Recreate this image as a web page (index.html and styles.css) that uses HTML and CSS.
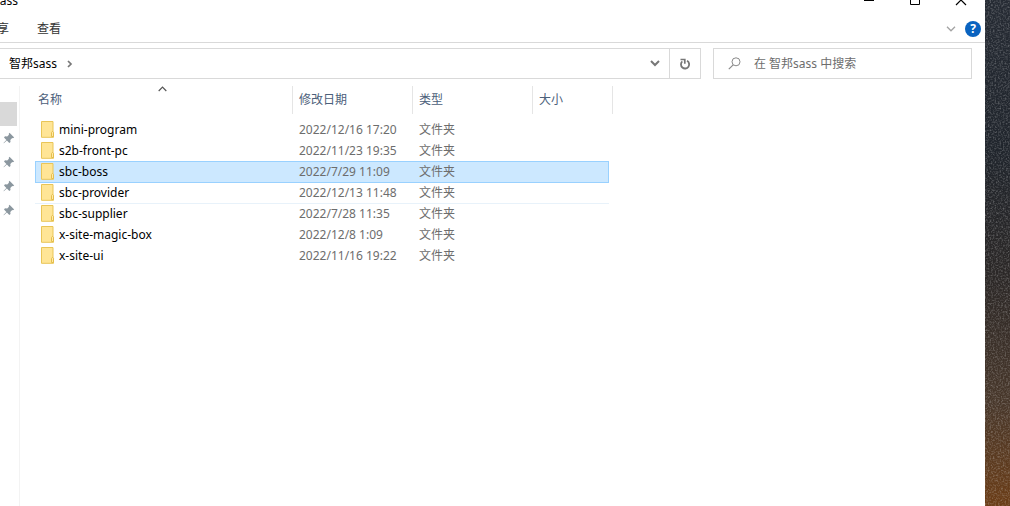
FILE: index.html
```html
<!DOCTYPE html>
<html lang="zh-CN">
<head>
<meta charset="utf-8">
<title>智邦sass</title>
<link rel="stylesheet" href="styles.css">
</head>
<body>
<svg class="defs" aria-hidden="true">
  <symbol id="folder" viewBox="0 0 14 17">
    <path d="M.5.5h11.500v10l.5.8v5H.5z" fill="#ffe596" stroke="#e9c557"/>
    <path d="M10.500 15.500v-4l1-1.200 1 1.200v4z" fill="#ffe9a6" stroke="#e5be4c"/>
  </symbol>
  <symbol id="pin" viewBox="0 0 12 12">
    <path d="M6.500.8l4.700 4.700-1.300.7-.7-.3-1.900 2 .2 2-1.200 1L3.900 8.500.8 11.300l-.3-.3 2.900-3.100L1 5.500l1-1.200 2.200.3 1.800-1.900-.3-.8z" fill="#8b979f"/>
  </symbol>
</svg>
<div class="screen">
  <main class="window">
    <header class="titlebar">
      <h1 class="title">sass</h1>
      <div class="controls">
        <button class="control" aria-label="最小化"><svg width="12" height="12"><path d="M1 6.500h10" stroke="#000"/></svg></button>
        <button class="control" aria-label="最大化"><svg width="12" height="12"><path d="M1.500 1.500h9v9h-9z" fill="none" stroke="#000"/></svg></button>
        <button class="control" aria-label="关闭"><svg width="12" height="12"><path d="M1 1l10 10M11 1L1 11" stroke="#000" stroke-width="1.200"/></svg></button>
      </div>
    </header>
    <nav class="ribbon">
      <button class="tab tab-share">享</button>
      <button class="tab">查看</button>
      <button class="expand" aria-label="展开功能区"><svg width="10" height="6"><path d="M1 .8l4 4 4-4" fill="none" stroke="#a3a3a3" stroke-width="1.300"/></svg></button>
      <button class="help" aria-label="帮助">?</button>
    </nav>
    <div class="toolbar">
      <div class="address">
        <button class="crumb">智邦sass</button>
        <button class="crumb-next" aria-label="子文件夹"><svg width="6" height="8"><path d="M1 1l3 3-3 3" fill="none" stroke="#777" stroke-width="1.700"/></svg></button>
        <button class="history" aria-label="以前的位置"><svg width="10" height="7"><path d="M1 1l4 4 4-4" fill="none" stroke="#777" stroke-width="2"/></svg></button>
        <button class="refresh" aria-label="刷新"><svg width="12" height="12"><path d="M8 2.800A4.100 4.100 0 1 1 3.300 3.400" fill="none" stroke="#777" stroke-width="1.800"/><path d="M1.500 1.500h4.300v4.300" fill="none" stroke="#777" stroke-width="1.700"/></svg></button>
      </div>
      <label class="search">
        <svg width="13" height="13"><path d="M.8 12.200l4.400-4.400" stroke="#8a8a8a" stroke-width="1.200"/><circle cx="8" cy="4.800" r="4" fill="none" stroke="#8a8a8a"/></svg>
        <input class="search-input" type="text" placeholder="在 智邦sass 中搜索" aria-label="搜索">
      </label>
    </div>
    <div class="content">
      <aside class="sidebar">
        <span class="thumb"></span>
        <svg class="pin"><use href="#pin"/></svg>
        <svg class="pin"><use href="#pin"/></svg>
        <svg class="pin"><use href="#pin"/></svg>
        <svg class="pin"><use href="#pin"/></svg>
      </aside>
      <table class="files">
        <thead>
          <tr class="row head">
            <th class="sorted">名称<svg class="sort" width="9" height="6"><path d="M.7 5l3.800-3.800L8.300 5" fill="none" stroke="#555" stroke-width="1.200"/></svg></th>
            <th>修改日期</th><th>类型</th><th>大小</th>
          </tr>
        </thead>
        <tbody>
          <tr class="row"><td class="name"><svg class="folder"><use href="#folder"/></svg>mini-program</td><td>2022/12/16 17:20</td><td>文件夹</td><td></td></tr>
          <tr class="row"><td class="name"><svg class="folder"><use href="#folder"/></svg>s2b-front-pc</td><td>2022/11/23 19:35</td><td>文件夹</td><td></td></tr>
          <tr class="row selected"><td class="name"><svg class="folder"><use href="#folder"/></svg>sbc-boss</td><td>2022/7/29 11:09</td><td>文件夹</td><td></td></tr>
          <tr class="row ruled"><td class="name"><svg class="folder"><use href="#folder"/></svg>sbc-provider</td><td>2022/12/13 11:48</td><td>文件夹</td><td></td></tr>
          <tr class="row"><td class="name"><svg class="folder"><use href="#folder"/></svg>sbc-supplier</td><td>2022/7/28 11:35</td><td>文件夹</td><td></td></tr>
          <tr class="row"><td class="name"><svg class="folder"><use href="#folder"/></svg>x-site-magic-box</td><td>2022/12/8 1:09</td><td>文件夹</td><td></td></tr>
          <tr class="row"><td class="name"><svg class="folder"><use href="#folder"/></svg>x-site-ui</td><td>2022/11/16 19:22</td><td>文件夹</td><td></td></tr>
        </tbody>
      </table>
    </div>
  </main>
  <div class="desktop">
    <svg class="grain" aria-hidden="true">
      <filter id="grain"><feTurbulence type="fractalNoise" baseFrequency="0.600" numOctaves="2" seed="4"/><feColorMatrix values="0 0 0 0 .75  0 0 0 0 .75  0 0 0 0 .75  .7 0 0 0 -.3"/></filter>
      <rect width="100%" height="100%" filter="url(#grain)"/>
    </svg>
  </div>
</div>
</body>
</html>
```
FILE: styles.css
```css
* { box-sizing: border-box; }
body {
  margin: 0;
  font: 12px/20px "Noto Sans", "Noto Sans CJK SC", sans-serif;
  color: #000;
}
button {
  display: flex;
  align-items: center;
  justify-content: center;
  margin: 0;
  padding: 0;
  border: 0;
  background: none;
  font: inherit;
  color: inherit;
}
svg { display: block; flex: none; }
.defs { position: absolute; width: 0; height: 0; }
.screen { display: flex; height: 100vh; overflow: hidden; }
.window { flex: 1; display: flex; flex-direction: column; min-width: 0; background: #fff; }

.titlebar { display: flex; justify-content: space-between; align-items: flex-end; height: 14px; }
.title { margin: 0 0 3px -6px; font-size: 12px; font-weight: 400; line-height: 20px; }
.controls { display: flex; padding-right: 1px; }
.control { width: 46px; height: 12px; margin-bottom: 8px; }

.ribbon { display: flex; align-items: center; height: 29px; border-bottom: 1px solid #d9d9d9; color: #333; }
.tab { padding: 2px 14px 0; }
.tab-share { margin-left: -17px; }
.expand { width: 18px; height: 20px; margin-left: auto; padding-top: 2px; }
.help {
  width: 16px;
  height: 16px;
  margin: 2px 4px 0 5px;
  border-radius: 50%;
  background: #0a63c0;
  color: #fff;
  font-weight: 700;
  line-height: 16px;
}

.toolbar { display: flex; gap: 12px; height: 31px; margin: 5px 13px 0 0; }
.address { flex: 1; display: flex; border: 1px solid #d9d9d9; border-left: 0; }
.crumb { padding-left: 9px; }
.crumb-next { width: 26px; }
.history { width: 28px; margin-left: auto; }
.refresh { width: 31px; border-left: 1px solid #d9d9d9; }
.search { display: flex; align-items: center; gap: 13px; width: 259px; padding-left: 14px; border: 1px solid #d9d9d9; }
.search-input { flex: 1; min-width: 0; padding: 0; border: 0; outline: 0; background: none; font: inherit; }
.search-input::placeholder { color: #6d6d6d; opacity: 1; }

.content { flex: 1; display: flex; min-height: 0; padding-top: 7px; }
.sidebar { width: 20px; padding-top: 16px; border-right: 1px solid #f3f3f3; }
.thumb { display: block; width: 17px; height: 24px; background: #d9d9d9; }
.pin { width: 12px; height: 12px; margin: 6px 0 12px 3px; }

.files { display: block; flex: 1; max-width: 578px; margin-left: 15px; }
.files thead, .files tbody { display: block; }
.files tbody { margin: 6px 4px 0 0; }
.row { display: grid; grid-template-columns: 258px 120px 120px 1fr; height: 21px; }
.head { height: 27px; }
th, td { padding: 0 0 0 6px; text-align: left; font-weight: 400; line-height: 22px; color: #6d6d6d; }
th { border-right: 1px solid #e5e5e5; color: #4c607a; line-height: 28px; }
.sorted { position: relative; padding-left: 3px; }
.sort { position: absolute; left: 123px; top: 0; }
.name { display: flex; align-items: center; gap: 4px; color: #000; }
.folder { width: 14px; height: 17px; margin-bottom: 1px; }
.selected {
  background: #cce8ff;
  box-shadow: inset 0 1px #99d1ff, inset 1px 0 #99d1ff, inset -1px 0 #99d1ff, 0 1px #99d1ff;
}
.ruled { box-shadow: 0 1px #e8f2fa; }

.desktop { width: 25px; background: linear-gradient(#262b34, #20252c 30%, #2c2827 55%, #49382b 80%, #6b3d17); }
.grain { width: 100%; height: 100%; }
```
